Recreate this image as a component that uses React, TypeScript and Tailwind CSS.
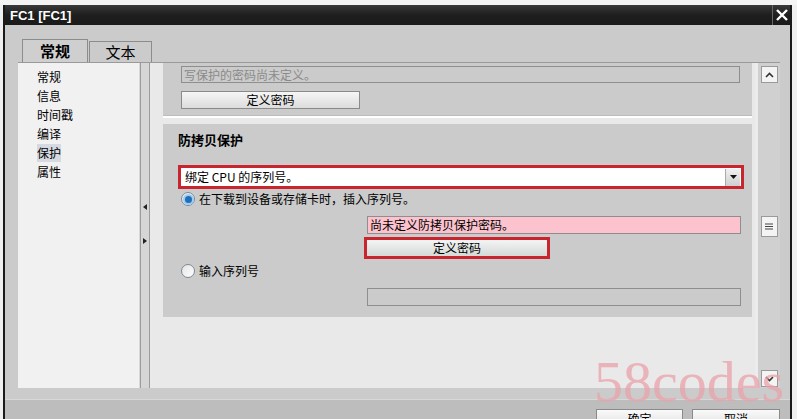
import React from "react";

const cjk = { fontFamily: '"Noto Sans CJK SC", "Noto Sans", sans-serif' };

function Radio({ checked }: { checked?: boolean }) {
  return (
    <div className="w-[14px] h-[14px] rounded-full border border-[#7a8a99] bg-gradient-to-br from-[#e4e4e4] to-[#ffffff] flex items-center justify-center shrink-0">
      {checked && <div className="w-[7px] h-[7px] rounded-full bg-[#1f6fb8] ring-2 ring-[#9ecbf0]" />}
    </div>
  );
}

export default function App() {
  const items = ["常规", "信息", "时间戳", "编译", "保护", "属性"];
  return (
    <div className="w-[797px] h-[419px] bg-[#f0f0f0] relative overflow-hidden" style={cjk}>
      <div className="h-[5px] bg-[#f4f4f4]" />
      <div className="ml-[3px] w-[789px] h-[414px] bg-[#cbcbcb] border-l-2 border-r-2 border-[#1a1a1a] flex flex-col">
        {/* title bar */}
        <div className="h-[20px] bg-gradient-to-b from-[#3a3a3a] via-[#1e1e1e] to-[#1a1a1a] flex items-center justify-between shrink-0">
          <span className="ml-[5px] text-white font-bold text-[13px] leading-none" style={{ fontFamily: '"Liberation Sans", Arial, sans-serif' }}>
            FC1 [FC1]
          </span>
          <div className="w-[18px] h-[20px] flex items-center justify-center border-l border-[#666]">
            <svg width="14" height="14" viewBox="0 0 14 14">
              <path d="M2 2 L12 12 M12 2 L2 12" stroke="white" strokeWidth="2.4" />
            </svg>
          </div>
        </div>

        {/* tabs */}
        <div className="h-[37px] flex items-end pl-[17px] shrink-0">
          <div className="w-[66px] h-[23px] border border-b-0 border-[#8c8c8c] bg-[#cfcfcf] flex items-center justify-center text-[15px] font-bold text-black">
            常规
          </div>
          <div className="ml-[1px] w-[63px] h-[21px] border border-b-0 border-[#8c8c8c] bg-[#cbcbcb] flex items-center justify-center text-[15px] text-black">
            文本
          </div>
        </div>

        {/* main */}
        <div className="flex h-[326px] ml-[13px] border-t border-[#9a9a9a] w-[762px] shrink-0">
          {/* left list */}
          <div className="w-[122px] shrink-0 bg-[#f1f1f1] pt-[4px] pl-[19px] border-r border-[#d8d8d8]">
            {items.map((t) => (
              <div key={t} className="h-[19px] flex items-center text-[12px] text-black">
                <span className={t === "保护" ? "bg-[#d5d9e2]" : ""}>{t}</span>
              </div>
            ))}
          </div>
          {/* splitter */}
          <div className="w-[10px] shrink-0 bg-[#d6d6d6] border-l border-r border-[#9c9c9c] flex flex-col items-center justify-start pt-[141px] gap-[28px]">
            <svg width="4" height="6" viewBox="0 0 4 6"><path d="M4 0 L0 3 L4 6 Z" fill="#222" /></svg>
            <svg width="4" height="6" viewBox="0 0 4 6"><path d="M0 0 L4 3 L0 6 Z" fill="#222" /></svg>
          </div>
          {/* right content */}
          <div className="w-[605px] shrink-0 bg-[#e9e9e9] pl-[13px]">
            <div className="bg-[#cbcbcb] w-[589px] h-[53px] pl-[18px] pt-[3px] border-b border-[#bdbdbd]">
              <div className="w-[559px] h-[17px] border border-[#8e8e8e] bg-[#cbcbcb] flex items-center pl-[2px] text-[12px] text-[#8a8a8a]">
                写保护的密码尚未定义。
              </div>
              <div className="mt-[8px] w-[179px] h-[18px] border border-[#8a8a8a] bg-gradient-to-b from-[#f6f6f6] to-[#dcdcdc] flex items-center justify-center text-[12px] text-black leading-none">
                定义密码
              </div>
            </div>
            <div className="h-[8px] w-[589px] border-t-2 border-white" />
            <div className="bg-[#cbcbcb] w-[589px] h-[193px] pl-[15px] pt-[6px]">
              <div className="text-[13px] font-bold text-black h-[20px] flex items-center">防拷贝保护</div>
              <div className="mt-[15px] w-[566px] h-[24px] border-[3px] border-[#c9252f] bg-white flex items-center justify-between">
                <span className="pl-[4px] text-[12px] text-black">绑定 CPU 的序列号。</span>
                <div className="w-[15px] h-[17px] mr-[1px] bg-gradient-to-b from-[#f0f0f0] to-[#cfcfcf] border-l border-[#aaa] flex items-center justify-center">
                  <svg width="7" height="4" viewBox="0 0 7 4"><path d="M0 0 L7 0 L3.5 4 Z" fill="#111" /></svg>
                </div>
              </div>
              <div className="mt-[3px] ml-[3px] flex items-center gap-[4px] h-[14px] text-[12px] text-black">
                <Radio checked />
                <span>在下载到设备或存储卡时，插入序列号。</span>
              </div>
              <div className="ml-[189px] mt-[10px] w-[374px] h-[18px] border border-[#8e8e8e] bg-[#fcc3ce] flex items-center pl-[2px] text-[12px] text-black">
                尚未定义防拷贝保护密码。
              </div>
              <div className="ml-[186px] mt-[3px] w-[186px] h-[22px] border-[3px] border-[#c9252f] flex">
                <div className="flex-1 bg-gradient-to-b from-[#f4f4f4] to-[#d4dad8] flex items-center justify-center text-[12px] text-black">
                  定义密码
                </div>
              </div>
              <div className="mt-[5px] ml-[3px] flex items-center gap-[4px] h-[14px] text-[12px] text-black">
                <Radio />
                <span>输入序列号</span>
              </div>
              <div className="ml-[189px] mt-[10px] w-[374px] h-[18px] border border-[#8e8e8e] bg-[#cbcbcb]" />
            </div>
          </div>
          {/* scrollbar */}
          <div className="w-[25px] shrink-0 bg-[#d0d0d0] flex flex-col items-center pt-[3px] pb-[1px] justify-between border-l-[3px] border-[#ececec]">
            <div className="w-[17px] h-[17px] bg-[#f4f4f4] border border-[#9a9a9a] flex items-center justify-center">
              <svg width="9" height="6" viewBox="0 0 9 6"><path d="M1 5 L4.5 1.5 L8 5" stroke="#333" strokeWidth="1.6" fill="none" /></svg>
            </div>
            <div className="w-[17px] h-[21px] bg-[#f4f4f4] border border-[#9a9a9a] flex items-center justify-center">
              <svg width="8" height="7" viewBox="0 0 8 7"><path d="M0 1 H8 M0 3.5 H8 M0 6 H8" stroke="#444" strokeWidth="1" /></svg>
            </div>
            <div className="w-[17px] h-[17px] bg-[#f4f4f4] border border-[#9a9a9a] flex items-center justify-center">
              <svg width="9" height="6" viewBox="0 0 9 6"><path d="M1 1 L4.5 4.5 L8 1" stroke="#333" strokeWidth="1.6" fill="none" /></svg>
            </div>
          </div>
        </div>

        {/* footer */}
        <div className="h-[11px] bg-[#cbcbcb] shrink-0" />
        <div className="flex-1 min-h-0 overflow-hidden bg-[#bdbdbd] border-t border-[#d8d8d8] flex justify-end items-start pt-[9px] pr-[10px] gap-[9px]">
          <div className="w-[87px] h-[20px] shrink-0 bg-gradient-to-b from-[#fafafa] to-[#dedede] border border-[#8a8a8a] flex justify-center text-[12px] text-black leading-[18px]">确定</div>
          <div className="w-[88px] h-[20px] shrink-0 bg-gradient-to-b from-[#fafafa] to-[#dedede] border border-[#8a8a8a] flex justify-center text-[12px] text-black leading-[18px]">取消</div>
        </div>
      </div>

      {/* watermark */}
      <div
        className="absolute left-[594px] top-[353px] text-[58px] leading-none text-[#e9a2aa] opacity-75 pointer-events-none"
        style={{ fontFamily: '"Liberation Serif", "Times New Roman", serif' }}
      >
        58codes
      </div>
    </div>
  );
}
